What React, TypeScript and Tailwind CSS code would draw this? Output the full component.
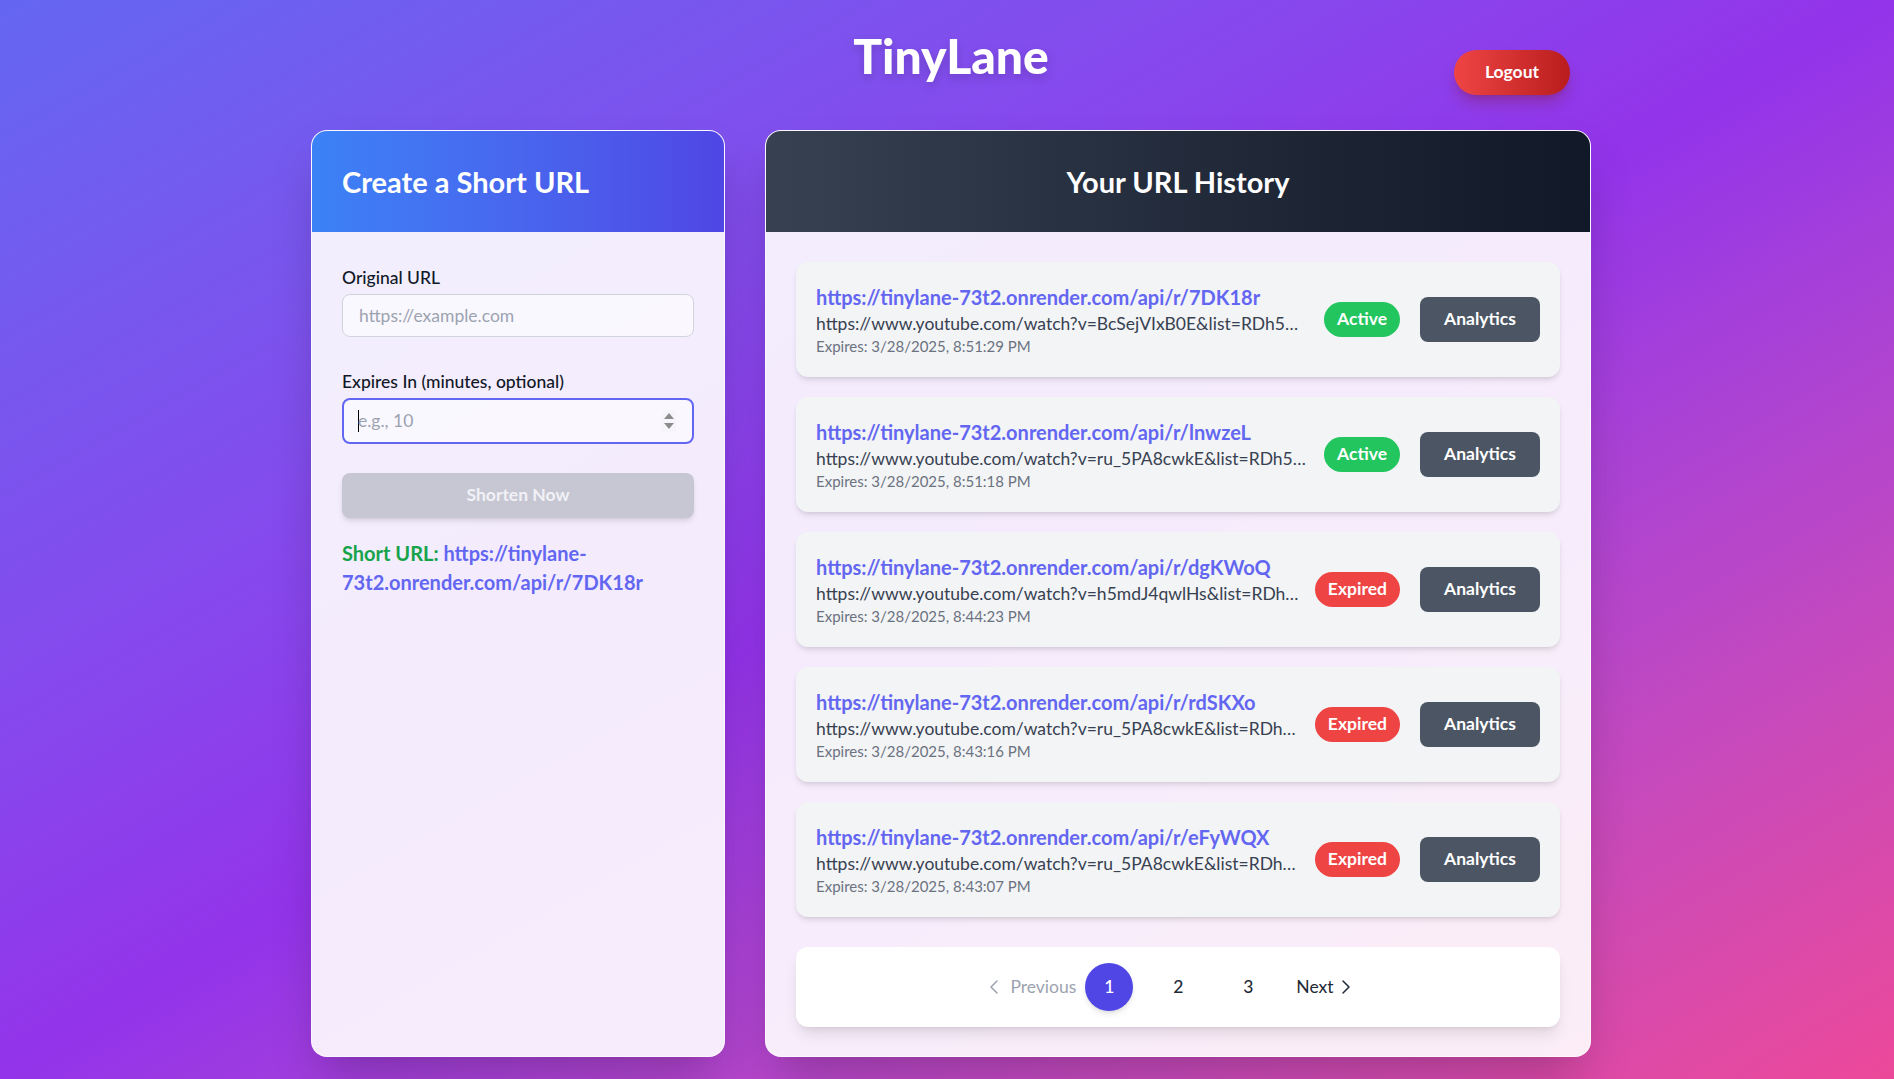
import { ChevronLeft, ChevronRight } from "lucide-react";

const BASE = "https://tinylane-73t2.onrender.com/api/r/";

const history = [
  {
    code: "7DK18r",
    original: "https://www.youtube.com/watch?v=BcSejVIxB0E&list=RDh5mdJ4qwlHs&start_radio=1",
    expires: "3/28/2025, 8:51:29 PM",
    active: true,
  },
  {
    code: "lnwzeL",
    original: "https://www.youtube.com/watch?v=ru_5PA8cwkE&list=RDh5mdJ4qwlHs&start_radio=1",
    expires: "3/28/2025, 8:51:18 PM",
    active: true,
  },
  {
    code: "dgKWoQ",
    original: "https://www.youtube.com/watch?v=h5mdJ4qwlHs&list=RDh5mdJ4qwlHs&start_radio=1",
    expires: "3/28/2025, 8:44:23 PM",
    active: false,
  },
  {
    code: "rdSKXo",
    original: "https://www.youtube.com/watch?v=ru_5PA8cwkE&list=RDh5mdJ4qwlHs&start_radio=1",
    expires: "3/28/2025, 8:43:16 PM",
    active: false,
  },
  {
    code: "eFyWQX",
    original: "https://www.youtube.com/watch?v=ru_5PA8cwkE&list=RDh5mdJ4qwlHs&start_radio=1",
    expires: "3/28/2025, 8:43:07 PM",
    active: false,
  },
];

const App = () => {
  return (
    <div className="min-h-screen bg-gradient-to-br from-[#6366f1] via-[#9333ea] to-[#ec4899] pl-2 pb-[22px] font-['Lato',sans-serif]">
      <div className="max-w-7xl mx-auto">
        {/* Header */}
        <header className="grid grid-cols-[1fr_auto_1fr] items-start pt-8">
          <div />
          <h1 className="text-5xl font-black text-white drop-shadow-lg leading-none">TinyLane</h1>
          <div className="flex justify-end pr-[21px] pt-[18px]">
            <button className="h-[45px] w-[116px] rounded-full bg-gradient-to-r from-[#ef4444] to-[#b91c1c] text-white text-[17.5px] font-bold shadow-lg shadow-red-900/30">
              Logout
            </button>
          </div>
        </header>

        <div className="flex gap-10 mt-[35px]">
          {/* Create card */}
          <div className="w-[414px] shrink-0 h-[927px] rounded-2xl overflow-hidden border border-white/60 bg-white/90 shadow-2xl flex flex-col">
            <div className="h-[101px] shrink-0 px-[30px] flex items-center bg-gradient-to-r from-[#3b82f6] to-[#4f46e5]">
              <h2 className="text-[29px] font-bold text-white">Create a Short URL</h2>
            </div>
            <div className="px-[30px] pt-[34px]">
              <label className="block h-6 leading-6 text-[17.5px] font-medium text-[#111827] mb-1">Original URL</label>
              <input
                type="text"
                placeholder="https://example.com"
                className="w-full h-[43px] px-4 rounded-lg border border-[#d1d5db] bg-white/60 text-[17.5px] placeholder:text-[#9ca3af] outline-none"
              />

              <label className="block h-6 leading-6 text-[17.5px] font-medium text-[#111827] mt-[33px] mb-1">
                Expires In (minutes, optional)
              </label>
              <div className="w-full h-[46px] pl-[14px] pr-[16px] rounded-lg border-2 border-[#6366f1] bg-white/60 flex items-center">
                <span className="w-px h-[22px] bg-black shrink-0" />
                <input
                  type="text"
                  placeholder="e.g., 10"
                  className="flex-1 min-w-0 -ml-px bg-transparent text-[17.5px] placeholder:text-[#9ca3af] outline-none"
                />
                <svg width="14" height="22" viewBox="0 0 14 22" className="shrink-0">
                  <rect x="0" y="0" width="14" height="22" fill="#f7f5fc" />
                  <path d="M2 9 L7 3 L12 9 Z" fill="#8b8b8b" />
                  <path d="M2 13 L7 19 L12 13 Z" fill="#8b8b8b" />
                </svg>
              </div>

              <button
                disabled
                className="w-full h-[45px] mt-[29px] rounded-lg bg-[#c6c7d3] text-[#f1f1f6] text-[17.5px] font-bold shadow-md"
              >
                Shorten Now
              </button>

              <p className="mt-[21px] text-[20px] leading-[29px] font-bold">
                <span className="text-[#16a34a]">Short URL: </span>
                <a className="text-[#6366f1]">{BASE}7DK18r</a>
              </p>
            </div>
          </div>

          {/* History card */}
          <div className="flex-1 min-w-0 h-[927px] rounded-2xl overflow-hidden border border-white/60 bg-white/90 shadow-2xl flex flex-col">
            <div className="h-[101px] shrink-0 flex items-center justify-center bg-gradient-to-r from-[#374151] to-[#111827]">
              <h2 className="text-[29px] font-bold text-white">Your URL History</h2>
            </div>
            <div className="px-[30px] pt-[30px]">
              <div className="flex flex-col gap-5">
                {history.map((item) => (
                  <div
                    key={item.code}
                    className="h-[115px] px-5 pt-[21px] pb-[21px] rounded-xl bg-[#f3f4f6] shadow-md flex items-center gap-4"
                  >
                    <div className="flex-1 min-w-0">
                      <a className="block text-[20px] leading-[29px] font-bold text-[#6366f1]">
                        {BASE}
                        {item.code}
                      </a>
                      <p className="text-[17.5px] leading-6 text-[#374151] truncate">{item.original}</p>
                      <p className="text-[15px] leading-5 text-[#6b7280]">Expires: {item.expires}</p>
                    </div>
                    <span
                      className={
                        item.active
                          ? "h-[35px] px-[13px] rounded-full bg-[#22c55e] text-white text-[17.5px] font-bold flex items-center"
                          : "h-[35px] px-[13px] rounded-full bg-[#ef4444] text-white text-[17.5px] font-bold flex items-center"
                      }
                    >
                      {item.active ? "Active" : "Expired"}
                    </span>
                    <button className="ml-1 h-[45px] w-[120px] rounded-lg bg-[#4b5563] text-white text-[17.5px] font-bold">
                      Analytics
                    </button>
                  </div>
                ))}
              </div>

              {/* Pagination */}
              <div className="mt-[30px] h-20 rounded-xl bg-white shadow-lg flex items-center justify-center">
                <button className="flex items-center gap-1 text-[17.5px] text-[#9ca3af]">
                  <ChevronLeft size={24} strokeWidth={1.5} />
                  Previous
                </button>
                <button className="ml-[9px] w-12 h-12 rounded-full bg-[#4f46e5] text-white text-[17.5px] font-medium shadow-md">
                  1
                </button>
                <button className="ml-[21px] w-12 h-12 rounded-full text-[#1f2937] text-[17.5px] font-medium">2</button>
                <button className="ml-[22px] w-12 h-12 rounded-full text-[#1f2937] text-[17.5px] font-medium">3</button>
                <button className="ml-[24px] pr-4 flex items-center text-[17.5px] text-[#1f2937]">
                  Next
                  <ChevronRight size={24} strokeWidth={1.5} />
                </button>
              </div>
            </div>
          </div>
        </div>
      </div>
    </div>
  );
};

export default App;
